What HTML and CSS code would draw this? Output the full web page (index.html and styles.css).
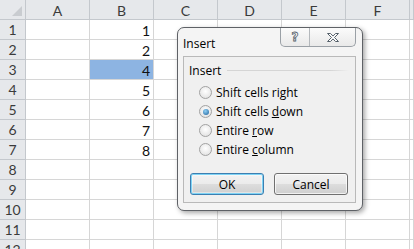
FILE: index.html
```html
<!DOCTYPE html>
<html lang="en">
<head>
  <meta charset="UTF-8" />
  <title>Insert</title>
  <link rel="stylesheet" href="styles.css">
</head>
<body>
  <div class="sheet">
    <div class="hd corner"><span class="tri"></span></div>
    <div class="hd col">A</div><div class="hd col">B</div><div class="hd col">C</div>
    <div class="hd col">D</div><div class="hd col">E</div><div class="hd col">F</div><div class="hd col"></div>

    <div class="hd row">1</div><div class="c"></div><div class="c num">1</div><div class="c"></div><div class="c"></div><div class="c"></div><div class="c"></div><div class="c"></div>
    <div class="hd row">2</div><div class="c"></div><div class="c num">2</div><div class="c"></div><div class="c"></div><div class="c"></div><div class="c"></div><div class="c"></div>
    <div class="hd row">3</div><div class="c"></div><div class="c num sel">4</div><div class="c"></div><div class="c"></div><div class="c"></div><div class="c"></div><div class="c"></div>
    <div class="hd row">4</div><div class="c"></div><div class="c num">5</div><div class="c"></div><div class="c"></div><div class="c"></div><div class="c"></div><div class="c"></div>
    <div class="hd row">5</div><div class="c"></div><div class="c num">6</div><div class="c"></div><div class="c"></div><div class="c"></div><div class="c"></div><div class="c"></div>
    <div class="hd row">6</div><div class="c"></div><div class="c num">7</div><div class="c"></div><div class="c"></div><div class="c"></div><div class="c"></div><div class="c"></div>
    <div class="hd row">7</div><div class="c"></div><div class="c num">8</div><div class="c"></div><div class="c"></div><div class="c"></div><div class="c"></div><div class="c"></div>
    <div class="hd row">8</div><div class="c"></div><div class="c"></div><div class="c"></div><div class="c"></div><div class="c"></div><div class="c"></div><div class="c"></div>
    <div class="hd row">9</div><div class="c"></div><div class="c"></div><div class="c"></div><div class="c"></div><div class="c"></div><div class="c"></div><div class="c"></div>
    <div class="hd row">10</div><div class="c"></div><div class="c"></div><div class="c"></div><div class="c"></div><div class="c"></div><div class="c"></div><div class="c"></div>
    <div class="hd row">11</div><div class="c"></div><div class="c"></div><div class="c"></div><div class="c"></div><div class="c"></div><div class="c"></div><div class="c"></div>
    <div class="hd row">12</div><div class="c"></div><div class="c"></div><div class="c"></div><div class="c"></div><div class="c"></div><div class="c"></div><div class="c"></div>
  </div>

  <div class="dialog">
    <div class="titlebar">
      <span class="title">Insert</span>
      <div class="caption-btns">
        <span class="cap help">?</span>
        <span class="cap close">
          <svg width="14" height="11" viewBox="0 0 14 11">
            <path d="M1.5 1.5h3l2.5 2.6 2.5-2.6h3l-4 4 4 4h-3l-2.5-2.6-2.5 2.6h-3l4-4z" fill="#fff" stroke="#55606a" stroke-width="1" stroke-linejoin="round"/>
          </svg>
        </span>
      </div>
    </div>
    <div class="client">
      <div class="group">
        <div class="legend"><span>Insert</span><span class="rule"></span></div>
        <label class="opt"><span class="radio"></span><span>Shift cells ri<u>g</u>ht</span></label>
        <label class="opt"><span class="radio on"></span><span>Shift cells <u>d</u>own</span></label>
        <label class="opt"><span class="radio"></span><span>Entire <u>r</u>ow</span></label>
        <label class="opt"><span class="radio"></span><span>Entire <u>c</u>olumn</span></label>
      </div>
      <div class="actions">
        <button class="btn default">OK</button>
        <button class="btn">Cancel</button>
      </div>
    </div>
  </div>
</body>
</html>
```

FILE: styles.css
```css
body {
  margin: 0;
  background: #fff;
  font-family: Lato, "Liberation Sans", sans-serif;
  overflow: hidden;
}
.sheet {
  display: grid;
  grid-template-columns: 26px repeat(6, 64px) 1fr;
  grid-auto-rows: 20px;
}
.sheet > div {
  box-sizing: border-box;
  border-right: 1px solid #d6d6d6;
  border-bottom: 1px solid #d6d6d6;
}
.hd {
  background: #e6e8eb;
  color: #3b3b3b;
  font-size: 14px;
  display: flex;
  align-items: center;
  justify-content: center;
  border-color: #c4c8cd !important;
}
.hd.col { padding-top: 1px; }
.corner { position: relative; }
.tri {
  position: absolute;
  right: 3px; bottom: 3px;
  width: 0; height: 0;
  border-left: 10px solid transparent;
  border-bottom: 10px solid #c9ccd0;
}
.c { background: #fff; }
.num {
  font-size: 14px;
  color: #111;
  text-align: right;
  padding: 2px 3px 0 0;
  line-height: 18px;
}
.sel { background: #8db4e2; }

/* dialog */
.dialog {
  position: absolute;
  left: 177px; top: 27px;
  width: 186px; height: 184px;
  box-sizing: border-box;
  border: 1px solid #5e6166;
  border-radius: 7px;
  background: #f4f4f4;
  box-shadow: 2px 2px 5px rgba(0, 0, 0, 0.35);
  display: flex;
  flex-direction: column;
  font-family: "Open Sans", "Noto Sans", sans-serif;
  font-size: 12px;
  color: #000;
}
.titlebar {
  height: 28px;
  display: flex;
  align-items: flex-start;
}
.title {
  font-size: 12px;
  margin: 7px 0 0 5px;
}
.caption-btns {
  margin-left: auto;
  margin-right: 6px;
  display: flex;
  height: 18px;
  border: 1px solid #9aa0a6;
  border-top: none;
  border-radius: 0 0 5px 5px;
  background: linear-gradient(#fbfbfb, #e9e9e9);
}
.cap {
  display: flex;
  align-items: center;
  justify-content: center;
}
.help {
  width: 28px;
  border-right: 1px solid #b4b8bc;
  font-family: "DejaVu Sans", sans-serif;
  font-weight: bold;
  font-size: 12px;
  color: #fff;
  -webkit-text-stroke: 0.8px #55606a;
}
.close { width: 45px; }
.client {
  flex: 1;
  margin: 0 6px 7px 5px;
  border: 1px solid #b9b9b9;
  background: #f0f0f0;
  display: flex;
  flex-direction: column;
}
.group { padding: 5px 6px 0 5px; }
.legend {
  display: flex;
  align-items: center;
  gap: 6px;
  height: 17px;
  margin-bottom: 4px;
}
.rule {
  flex: 1;
  height: 1px;
  background: linear-gradient(to right, #d5d5d5 85%, rgba(213, 213, 213, 0));
}
.opt {
  display: flex;
  align-items: center;
  gap: 4px;
  height: 19px;
  padding-left: 10px;
}
.radio {
  width: 11px; height: 11px;
  border-radius: 50%;
  border: 1px solid #a2a2a2;
  background: radial-gradient(circle at 50% 40%, #ffffff, #dcdcdc);
  display: flex;
  align-items: center;
  justify-content: center;
}
.radio.on::after {
  content: "";
  width: 6px; height: 6px;
  border-radius: 50%;
  background: radial-gradient(circle at 40% 35%, #8fd0f5, #1c5f99);
}
.actions {
  margin-top: auto;
  margin-bottom: 7px;
  display: flex;
  justify-content: space-between;
  padding: 0 7px 0 6px;
}
.btn {
  font: inherit;
  font-size: 12px;
  width: 74px; height: 22px;
  border: 1px solid #707070;
  border-radius: 3px;
  background: linear-gradient(#f2f2f2 0%, #ebebeb 50%, #dddddd 51%, #cfcfcf 100%);
  box-shadow: inset 0 0 0 1px rgba(255, 255, 255, 0.7);
  color: #000;
  padding: 0;
}
.btn.default {
  border-color: #3c7fb1;
  box-shadow: inset 0 0 0 1px #7ed3f5, inset 0 0 0 2px rgba(255, 255, 255, 0.4);
}
```
